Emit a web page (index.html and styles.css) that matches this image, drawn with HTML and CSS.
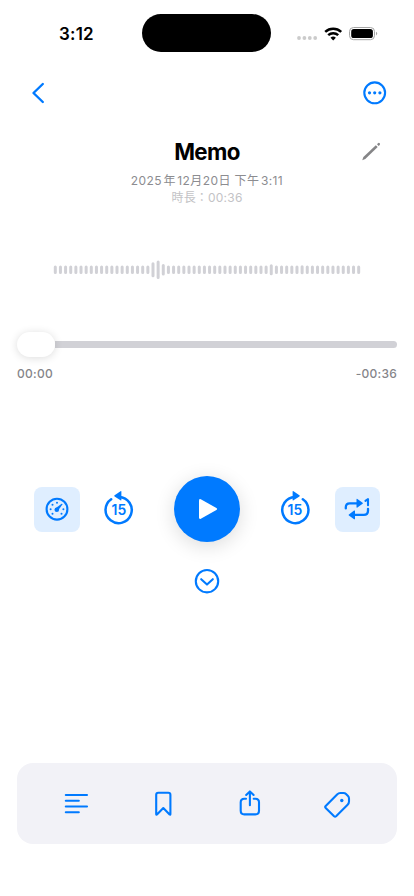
FILE: index.html
```html
<!DOCTYPE html>
<html lang="zh-Hant">
<head>
<meta charset="utf-8">
<meta name="viewport" content="width=device-width, initial-scale=1">
<title>Memo</title>
<link rel="stylesheet" href="styles.css">
</head>
<body>
<main class="screen">
  <div class="status">
    <span class="clock">3:12</span>
    <div class="island"></div>
    <svg class="indicators" width="82" height="20" viewBox="0 0 82 20">
      <g fill="#cbcbcb"><circle cx="2" cy="14" r="1.9"/><circle cx="7.4" cy="14" r="1.9"/><circle cx="12.8" cy="14" r="1.9"/><circle cx="18.2" cy="14" r="1.9"/></g>
      <g fill="none" stroke="#000" stroke-width="2.5"><path d="M28.2 7.8a11.8 11.8 0 0 1 16 0"/><path d="M31.2 11.1a7.4 7.4 0 0 1 10 0"/></g>
      <path d="M36.2 16.4l-2.7-2.7a4 4 0 0 1 5.4 0z"/>
      <rect x="52.5" y="3.5" width="25" height="12.2" rx="4" fill="none" stroke="#a5a5a5"/>
      <rect x="54.2" y="5.1" width="21.7" height="9" rx="2.7"/>
      <path d="M79.1 7.8c1.5.6 1.5 3 0 3.6z" fill="#999"/>
    </svg>
  </div>
  <nav class="nav">
    <svg width="14" height="24" viewBox="0 0 14 24" class="line heavy"><path d="M11.8 3L2.5 12l9.3 9"/></svg>
    <svg width="24" height="24" viewBox="0 0 24 24" class="line"><circle cx="11.7" cy="11.8" r="10.4"/><g class="solid"><circle cx="6.5" cy="11.8" r="1.6"/><circle cx="11.7" cy="11.8" r="1.6"/><circle cx="16.9" cy="11.8" r="1.6"/></g></svg>
  </nav>
  <header class="heading">
    <div class="title-row">
      <h1>Memo</h1>
      <svg class="pencil" width="20" height="20" viewBox="0 0 20 20"><path d="M.2 18.2l1.2-3.1L13.8 3.2l1.9 1.9L3.3 17z"/><path d="M15 2.2l1-1q1-.7 1.7.1t0 1.6l-1 1z"/></svg>
    </div>
    <p class="date">2025<i></i>年<i></i>12月20日 下午<i></i>3:11</p>
    <p class="duration">時長：00:36</p>
  </header>
  <svg class="wave" width="308" height="20" viewBox="0 0 308 20">
    <path class="bars" d="M2.3 6.8v5.8"/>
  </svg>
  <section class="progress">
    <div class="slider"><div class="thumb"></div><div class="track"></div></div>
    <div class="times"><span>00:00</span><span>-00:36</span></div>
  </section>
  <section class="controls">
    <button class="tile" aria-label="Speed">
      <svg width="24" height="24" viewBox="0 0 24 24" class="line"><circle cx="12" cy="12.2" r="10.4"/><g class="solid"><circle cx="12" cy="5.8" r="1"/><circle cx="7.5" cy="7.7" r="1"/><circle cx="5.6" cy="12.2" r="1"/><circle cx="18.4" cy="12.2" r="1"/><circle cx="7.5" cy="16.7" r="1"/><circle cx="16.5" cy="16.7" r="1"/><circle cx="11.8" cy="12.8" r="2.3"/><path d="M10.3 11.4l6.3-4.6q.9-.2.8.8l-4.4 6z"/></g></svg>
    </button>
    <div class="transport">
      <button class="skip" aria-label="Back">
        <svg width="30" height="34" viewBox="0 0 30 34" class="line skip-ring"><path d="M7.2 8.2A13.1 13.1 0 1 0 15.2 5.9"/><path class="solid" d="M10.6 5.4q-.7-.6 0-1.1L16.5.2q.9-.4.9.5v8.1q0 .9-.9.4z"/></svg>
        <span class="seconds">15</span>
      </button>
      <button class="play" aria-label="Play"><svg width="24" height="24" viewBox="0 0 24 24"><path d="M3 3.4v17.2q.1 1.8 1.8 1.1l15.6-8.6q1.4-1.1 0-2.2L4.8 2.3Q3.2 1.6 3 3.4z"/></svg></button>
      <button class="skip" aria-label="Forward">
        <svg width="30" height="34" viewBox="0 0 30 34" class="line skip-ring"><path d="M22.8 8.2A13.1 13.1 0 1 1 14.8 5.9"/><path class="solid" d="M19.4 5.4q.7-.6 0-1.1L13.5.2q-.9-.4-.9.5v8.1q0 .9.9.4z"/></svg>
        <span class="seconds">15</span>
      </button>
    </div>
    <button class="tile" aria-label="Repeat">
      <svg width="26" height="24" viewBox="0 0 26 24" class="line repeat"><path d="M1.8 11.4v-1.1q0-4 4-4h7M24 11.8v1.9q0 4.2-4.2 4.2h-9"/><path class="solid" d="M12.5 2.5q0-1 .9-.5l5.2 3.8q.6.5 0 1l-5.2 3.8q-.9.5-.9-.5zM11 14.1q0-1-.9-.5l-5.2 3.8q-.6.5 0 1l5.2 3.8q.9.5.9-.5z"/><path class="one" d="M21.4 3.8L24 2.2v6"/></svg>
    </button>
  </section>
  <div class="more"><svg width="26" height="26" viewBox="0 0 26 26" class="line"><circle cx="13" cy="13.2" r="11.2"/><path d="M7.2 11.2l5.8 5.4 5.8-5.4"/></svg></div>
  <footer class="toolbar">
    <svg width="26" height="28" viewBox="0 0 26 28" class="line"><path d="M2.8 5h21.2M2.8 10.8h13M2.8 16.5h21.2M2.8 22.3h13"/></svg>
    <svg width="26" height="28" viewBox="0 0 26 28" class="line"><path d="M6.2 24.2V4.8Q6.2 2.7 8.3 2.7h10q2.1 0 2.1 2.1v19.4q-.1.9-.8.3l-6.3-6.4L7 24.5q-.7.6-.8-.3z"/></svg>
    <svg width="26" height="28" viewBox="0 0 26 28" class="line"><path d="M10 8.7H8.3q-3.6 0-3.6 3.6v8.5q0 3.6 3.6 3.6h11.1q3.6 0 3.6-3.6v-8.5q0-3.6-3.6-3.6h-1.7M13.9 15.3V1.7M10.2 5l3.7-3.6L17.6 5"/></svg>
    <svg width="28" height="28" viewBox="0 0 28 28" class="line"><path d="M2.7 15.9L14.1 4.4Q15.5 3 17.3 3h3.2q1.5 0 2.5 1l2 2q1 1 1 2.5v3.1q0 1.8-1.4 3.2L13.1 26.3q-1 .9-2 0L2.7 17.9q-1-1 0-2z"/><circle cx="18.8" cy="10.5" r="1.7" class="solid"/></svg>
  </footer>
</main>
<script src="wave.js"></script>
</body>
</html>
```
FILE: styles.css
```css
* { box-sizing: border-box; }
body { margin: 0; background: #fff; font-family: Inter, "Noto Sans CJK TC", sans-serif; }
.screen { width: 414px; height: 896px; display: flex; flex-direction: column; overflow: hidden; }
svg { display: block; flex: none; }
h1, p { margin: 0; }
button { border: 0; padding: 0; margin: 0; font: inherit; display: grid; place-items: center; }
.line { fill: none; stroke: #007aff; stroke-width: 2.1; stroke-linecap: round; stroke-linejoin: round; }
.heavy { stroke-width: 2.4; }
.solid, .line .solid { fill: #007aff; stroke: none; }

.status { height: 66px; display: grid; grid-template-columns: 142.4px 129px 1fr; align-items: center; }
.clock { padding: 2px 0 0 59px; font-size: 17px; font-weight: 600; line-height: 20px; letter-spacing: .2px; }
.island { height: 38px; border-radius: 19px; background: #000; }
.indicators { margin: 2px 0 0 25.5px; }

.nav { height: 53px; padding: 0 27px 0 31px; display: flex; justify-content: space-between; align-items: center; }

.heading { height: 128px; padding-top: 17px; text-align: center; }
.title-row { height: 31px; display: grid; grid-template-columns: 72px 1fr 72px; align-items: center; }
h1 { grid-column: 2; padding-top: 1px; font-size: 22.3px; line-height: 30px; font-weight: 650; letter-spacing: -.6px; }
.pencil { fill: #858587; margin: 1px 0 0 20px; }
.date { margin-top: 5px; font-size: 12px; line-height: 17px; letter-spacing: .4px; color: #8c8c90; }
.date i { display: inline-block; width: 1.5px; }
.duration { font-size: 12px; line-height: 17px; letter-spacing: .2px; color: #c3c3c6; }

.wave { margin: 13px 0 0 53px; }
.bars { fill: none; stroke: #d1d1d6; stroke-width: 3; stroke-linecap: round; }

.progress { padding: 0 17px; margin-top: 52px; }
.slider { height: 25px; display: flex; align-items: center; }
.thumb { width: 38px; height: 25px; border-radius: 12.5px; background: #fff; box-shadow: 0 1px 8px rgba(0,0,0,.14); z-index: 1; }
.track { flex: 1; height: 6.5px; border-radius: 0 4px 4px 0; background: #d1d1d6; }
.times { display: flex; justify-content: space-between; margin-top: 8px; font-size: 12px; line-height: 17px; font-weight: 450; letter-spacing: .25px; color: #85858a; }

.controls { height: 66px; margin-top: 94.4px; padding: 0 34px; display: flex; justify-content: space-between; align-items: center; }
.tile { width: 45.5px; height: 45px; border-radius: 8px; background: #dfeeff; }
.transport { display: flex; align-items: center; gap: 40px; }
.skip { width: 30px; height: 34px; background: none; margin-bottom: 3px; }
.skip > * { grid-area: 1 / 1; }
.skip-ring { stroke-width: 2.5; }
.seconds { margin-top: 5px; color: #007aff; font-size: 14px; line-height: 16px; font-weight: 620; letter-spacing: .1px; }
.repeat { stroke-width: 2.3; }
.one { stroke-width: 2.1; }
.play { width: 66px; height: 66px; border-radius: 50%; background: #007aff; box-shadow: 0 4px 20px rgba(0,0,0,.14); }
.play svg { fill: #fff; margin-left: 1px; }
.more { display: flex; justify-content: center; margin-top: 25.6px; }
.toolbar { width: 380px; height: 81px; margin: 169px auto 0; padding: 1px 46px 0; border-radius: 16px; background: #f2f2f7; display: flex; justify-content: space-between; align-items: center; }
```
FILE: wave.js
```js
const heights = { 19: 15, 20: 18.6, 21: 11.4, 42: 11, 48: 9 };
let d = "";
for (let i = 0; i < 60; i++) {
  const half = ((heights[i] || 8.6) - 3) / 2;
  d += `M${(2.3 + i * 5.142).toFixed(2)} ${9.7 - half}v${half * 2}`;
}
document.querySelector(".bars").setAttribute("d", d);
```
